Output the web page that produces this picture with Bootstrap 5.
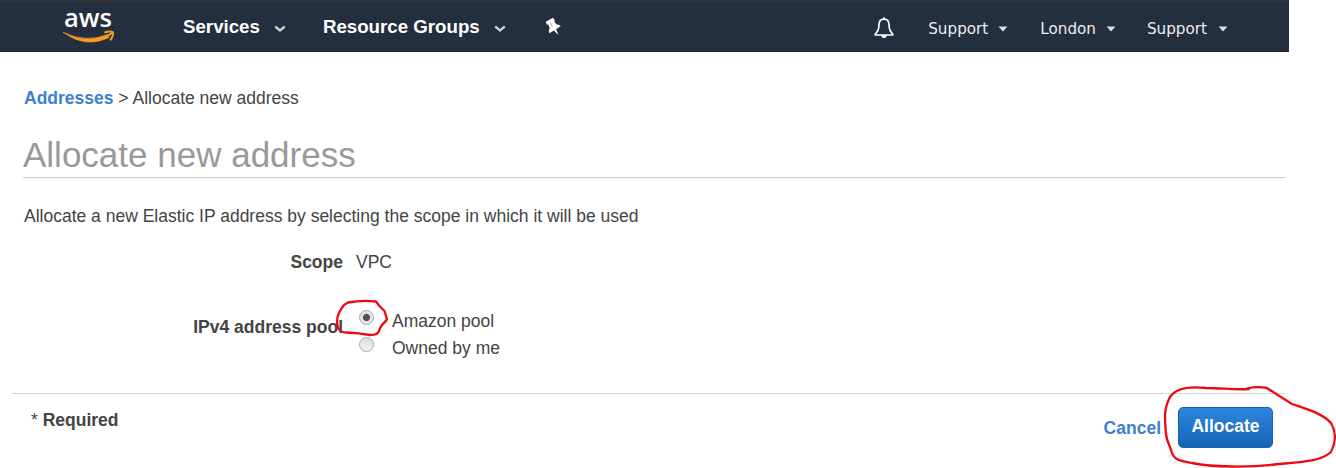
<!DOCTYPE html>
<html lang="en">
<head>
<meta charset="utf-8">
<meta name="viewport" content="width=device-width, initial-scale=1">
<title>Allocate new address</title>
<link href="https://cdn.jsdelivr.net/npm/bootstrap@5.3.0/dist/css/bootstrap.min.css" rel="stylesheet">
<style>
body{font:17.5px/24px "Liberation Sans",Arial,sans-serif;color:#444;background:#fff;height:468px;overflow:hidden}
a{text-decoration:none;color:#3c80d0;font-weight:700}
.topbar{width:1289px;height:52px;background:#232f3e;border-top:2px solid #2d3438;border-bottom:1px solid #1b2430;padding:0}
.topbar .nav-link{padding:0;color:#fff;white-space:nowrap}
.main-link{font-size:18.7px;line-height:24px;font-weight:700}
.side-link{font:15.2px/24px "DejaVu Sans",Verdana,sans-serif;padding-top:3px!important}
.topbar .side-link{color:#eee}
svg{display:block;flex:none}
.content{width:1285px;padding:34px 0 0 24px}
h1{font-size:35px;line-height:40px;color:#999;font-weight:400;margin:25px 0 26px -1px;padding-bottom:2px;border-bottom:1px solid #ccc}
.form-name{width:319px;text-align:right;font-weight:700}
.choice{height:27px}
.choice .form-check-input{width:15px;height:15px;margin:1px 18px 0 0;border:1px solid #aaa;background:linear-gradient(#ddd,#f1f1f1)}
.choice .form-check-input:checked{background:radial-gradient(circle,#505050 0 3.1px,#e4e4e4 4px)}
.actions{width:1273px;margin:30px 0 0 12px;border-top:1px solid #d5d5d5;padding:13px 12px 0 19px}
.btn-allocate{width:95px;height:41px;padding:0 0 2px;border:1px solid #1762ae;border-radius:5px;background:linear-gradient(#2f86dd,#1664b7);color:#fff;font-weight:700;font-size:17.5px;line-height:37px}
.btn-allocate:hover{color:#fff;background:linear-gradient(#2f86dd,#1664b7)}
</style>
</head>
<body class="position-relative">
<nav class="topbar d-flex align-items-start">
  <svg class="overflow-visible" width="60" height="48" viewBox="0 2 60 48" style="margin-left:60px" aria-label="aws">
    <text x="4" y="27" font-family="Open Sans, sans-serif" font-weight="600" font-size="25.5" textLength="48" lengthAdjust="spacingAndGlyphs" fill="#fff">aws</text>
    <path d="M3 32.200Q26 43.500 47.500 34.500L49 37.500Q26 49 3 32.200Z" fill="#f79a1e" stroke="#f79a1e" stroke-width=".7"/>
    <path d="M44.300 32.600Q50 30.800 53 32.300Q53.500 36 50.200 40.300" fill="none" stroke="#f79a1e" stroke-width="2"/>
    <path d="M47 36.500L52.500 32.500" stroke="#f79a1e" stroke-width="2"/>
  </svg>
  <a class="nav-link main-link" href="#" style="margin:13px 0 0 63px">Services</a>
  <svg width="12" height="8" viewBox="0 0 12 8" style="margin:23px 0 0 14px"><path d="M1.200 1.500L6 5.500 10.800 1.500" fill="none" stroke="#ccc" stroke-width="2.400"/></svg>
  <a class="nav-link main-link" href="#" style="margin:13px 0 0 37px">Resource Groups</a>
  <svg width="12" height="8" viewBox="0 0 12 8" style="margin:23px 0 0 14px"><path d="M1.200 1.500L6 5.500 10.800 1.500" fill="none" stroke="#ccc" stroke-width="2.400"/></svg>
  <svg width="17" height="18" viewBox="0 0 17 18" style="margin:15px 0 0 39px"><path d="M.8 4.800L8 .8 9.800 3.200 9.300 4.500 11.600 7.600Q14.200 7.100 15.700 9.200L11 12.300 13.200 17.300 12.400 17.300 9 13.400 4.300 16.300Q3.200 13.500 4.700 11L3.300 7.600 1.800 7.500Z" fill="#fff"/><path d="M5.500 6L7.400 9.800" stroke="#7b838d" stroke-width=".8"/></svg>
  <div class="d-flex ms-auto" style="margin-right:61px">
    <svg width="20" height="22" viewBox="0 0 20 22" style="margin:15px 34px 0 0"><path d="M10 2.200C6.300 2.200 4.900 5.200 4.900 8.500 4.900 12.800 3.600 14.800 1.200 17.100V18H18.800V17.100C16.400 14.800 15.100 12.800 15.100 8.500 15.100 5.200 13.700 2.200 10 2.200Z" fill="none" stroke="#fff" stroke-width="1.700" stroke-linejoin="round"/><path d="M9 .5H11V3H9ZM7 18H13Q12.500 21 10 21 7.500 21 7 18Z" fill="#fff"/></svg>
    <a class="nav-link side-link" href="#" style="margin-top:12px">Support</a>
    <svg width="10" height="6" viewBox="0 0 10 6" style="margin:24px 32px 0 10px"><path d="M.5.5H9.500L5 5.500Z" fill="#ddd"/></svg>
    <a class="nav-link side-link" href="#" style="margin-top:12px">London</a>
    <svg width="10" height="6" viewBox="0 0 10 6" style="margin:24px 31px 0 10px"><path d="M.5.5H9.500L5 5.500Z" fill="#ddd"/></svg>
    <a class="nav-link side-link" href="#" style="margin-top:12px">Support</a>
    <svg width="10" height="6" viewBox="0 0 10 6" style="margin:24px 0 0 11px"><path d="M.5.5H9.500L5 5.500Z" fill="#ddd"/></svg>
  </div>
</nav>
<main class="content">
  <div><a href="#">Addresses</a> &gt; Allocate new address</div>
  <h1>Allocate new address</h1>
  <p class="mb-0">Allocate a new Elastic IP address by selecting the scope in which it will be used</p>
  <div class="d-flex" style="margin-top:22px"><div class="form-name">Scope</div><div style="margin-left:13px">VPC</div></div>
  <div class="d-flex" style="margin-top:35px">
    <div class="form-name" style="padding-top:6px">IPv4 address pool</div>
    <div style="margin-left:16px">
      <label class="choice d-flex"><input class="form-check-input" type="radio" name="pool" checked>Amazon pool</label>
      <label class="choice d-flex"><input class="form-check-input" type="radio" name="pool">Owned by me</label>
    </div>
  </div>
</main>
<footer class="actions d-flex align-items-start">
  <div style="margin-top:1px">* <b>Required</b></div>
  <a class="ms-auto" href="#" style="margin:9px 17px 0 0">Cancel</a>
  <button class="btn btn-allocate" type="button">Allocate</button>
</footer>
<svg class="position-absolute top-0 start-0 pe-none" width="1336" height="468" viewBox="0 0 1336 468" fill="none" stroke="#ee0810" stroke-width="2.300" stroke-linejoin="round" stroke-linecap="round">
  <path d="M376 301.500Q362 300 348 302.500Q343 305 341.500 308.500Q335 317 338 328Q341 333 347 332.500Q359 333 370 335Q378 335 379 331Q381 325 385 322L387 319L384.500 311L379 305.500L376 301.500Z"/>
  <path d="M1249 389C1235 390 1222 388 1206 388C1189 386 1176 388 1170 397C1163 410 1165 421 1166 434C1167 443 1170 445 1171 450C1174 461 1179 460 1192 463C1212 467 1248 468 1279 464C1304 462 1321 461 1331 452C1337 440 1335 430 1331 423C1322 413 1306 409 1292 404C1282 398 1273 392 1267 388Q1257 386 1247 388.500"/>
</svg>
<script src="https://cdn.jsdelivr.net/npm/bootstrap@5.3.0/dist/js/bootstrap.bundle.min.js"></script>
</body>
</html>
